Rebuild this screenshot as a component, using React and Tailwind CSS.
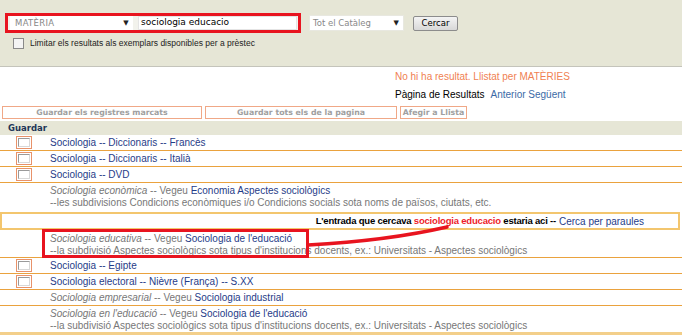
import React from "react";

const link = "text-[#1f3c88]";

const Check = () => (
  <span className="w-[16px] h-[13px] border border-[#e8926a] bg-white flex items-center justify-center">
    <span className="w-[12px] h-[9px] border border-[#9a9a9a] border-r-[#d8d8d8] border-b-[#d8d8d8] bg-white" />
  </span>
);

const Row = ({ check, children, tall, last }) => (
  <div
    className={`flex ${tall ? (last ? "items-start pt-[2px]" : "items-start pt-[3px]") : "items-center h-[16px]"} ${
      last ? "border-b-[3px] border-[#f3cf8a]" : "border-b border-[#eaa23e]"
    }`}
  >
    <div className="w-[50px] shrink-0 flex pl-[16px]">{check && <Check />}</div>
    <div className="leading-[12px]">{children}</div>
  </div>
);

const Ref = ({ from, to, note }) => (
  <>
    <div>
      <span className="italic text-[#777]">{from}</span>
      <span className="text-[#777]"> -- Vegeu </span>
      <span className={link}>{to}</span>
    </div>
    {note && <div className="text-[#777]">{note}</div>}
  </>
);

export default function App() {
  return (
    <div className="w-[682px] h-[335px] overflow-hidden bg-white font-['Liberation_Sans',Arial,sans-serif] text-[10px] relative">
      {/* search area */}
      <div className="h-[67px] bg-[#e6e6d6] border-b border-[#c4c4bb] pt-[13px] pl-[5px]">
        <div className="flex items-center">
          <div className="w-[296px] h-[20px] border-[3px] border-[#e8141f] flex items-stretch bg-[#f2f2ec]">
            <div className="w-[123px] ml-[2px] bg-white flex items-center justify-between pl-[5px] pr-[4px] text-[#888] font-['DejaVu_Sans',sans-serif] text-[8.5px] tracking-[0.3px]">
              <span>MATÈRIA</span>
              <span className="text-[7px] text-[#222]">▼</span>
            </div>
            <div className="flex-1 ml-[5px] mr-[1px] bg-white border border-[#e4e4e4] flex items-center pl-[2px] text-black font-['DejaVu_Sans',sans-serif] text-[9px]">
              sociologia educacio
            </div>
          </div>
          <div className="ml-[8px] w-[95px] h-[16px] bg-white border border-[#e8e8e0] flex items-center justify-between pl-[3px] pr-[4px] text-[#888] font-['DejaVu_Sans',sans-serif] text-[8.5px]">
            <span>Tot el Catàleg</span>
            <span className="text-[7px] text-[#222]">▼</span>
          </div>
          <button className="ml-[9px] w-[45px] h-[15px] rounded-[2px] border border-[#8c8c8c] bg-gradient-to-b from-[#f4f4f4] to-[#d8d8d8] text-black font-['DejaVu_Sans',sans-serif] text-[8.5px] leading-none">
            Cercar
          </button>
        </div>
        <div className="flex items-center mt-[4px] ml-[8px]">
          <span className="w-[11px] h-[11px] border border-[#8a8a8a] bg-[#f4f4f4]" />
          <span className="ml-[6px] text-[8.5px] text-[#222]">
            Limitar els resultats als exemplars disponibles per a prèstec
          </span>
        </div>
      </div>

      {/* results header */}
      <div className="h-[54px] bg-white flex flex-col leading-[12px]">
        <div className="ml-[395px] mt-[4px] text-[#f07f52]">No hi ha resultat. Llistat per MATÈRIES</div>
        <div className="ml-[395px] mt-[6px]">
          <span className="text-black">Pàgina de Resultats</span>
          <span className="ml-[6px] text-[#3b6aa6]">Anterior Següent</span>
        </div>
        <div className="mt-[5px] flex gap-[3px] pl-[2px] font-['DejaVu_Sans',sans-serif] font-bold text-[7.8px] text-[#a0a0a0]">
          <div className="w-[200px] h-[13px] border border-[#f0a887] flex items-center justify-center">
            Guardar els registres marcats
          </div>
          <div className="w-[192px] h-[13px] border border-[#f0a887] flex items-center justify-center">
            Guardar tots els de la pagina
          </div>
          <div className="w-[67px] h-[13px] border border-[#f0a887] flex items-center justify-center">
            Afegir a Llista
          </div>
        </div>
      </div>

      <div className="h-[14px] bg-[#e6e6d6] flex items-end pl-[8px] pb-[1px] font-['DejaVu_Sans',sans-serif] font-bold text-[8.5px] leading-[11px] text-[#1d3557]">
        Guardar
      </div>

      {/* list */}
      <div className="relative">
        <Row check><span className={link}>Sociologia -- Diccionaris -- Francès</span></Row>
        <Row check><span className={link}>Sociologia -- Diccionaris -- Italià</span></Row>
        <Row check><span className={link}>Sociologia -- DVD</span></Row>
        <div className="flex pt-[2px] pb-[3px] leading-[12px]">
          <div className="w-[50px] shrink-0" />
          <div>
            <Ref
              from="Sociologia econòmica"
              to="Economia Aspectes sociològics"
              note="--les subdivisions Condicions econòmiques i/o Condicions socials sota noms de països, ciutats, etc."
            />
          </div>
        </div>
        <div className="h-[18px] border-2 border-[#f3c66e] mr-[2px] flex items-center justify-end pr-[34px] text-black">
          <span className="font-bold text-[9.5px] tracking-[-0.2px]">
            L'entrada que cercava <span className="text-[#ee1c2a]">sociologia educacio</span> estaria aci --
          </span>
          <span className={`ml-[3px] ${link}`}>Cerca per paraules</span>
        </div>
        <Row tall>
          <Ref
            from="Sociologia educativa"
            to="Sociologia de l'educació"
            note="--la subdivisió Aspectes sociològics sota tipus d'institucions docents, ex.: Universitats - Aspectes sociològics"
          />
        </Row>
        <Row check><span className={link}>Sociologia -- Egipte</span></Row>
        <Row check><span className={link}>Sociologia electoral -- Nièvre (França) -- S.XX</span></Row>
        <Row><Ref from="Sociologia empresarial" to="Sociologia industrial" /></Row>
        <Row tall last>
          <Ref
            from="Sociologia en l'educació"
            to="Sociologia de l'educació"
            note="--la subdivisió Aspectes sociològics sota tipus d'institucions docents, ex.: Universitats - Aspectes sociològics"
          />
        </Row>

        {/* annotation */}
        <div className="absolute left-[42px] top-[94px] w-[267px] h-[29px] border-[3px] border-[#e8141f]" />
        <svg className="absolute left-[305px] top-[86px]" width="150" height="30" viewBox="0 0 150 30">
          <path d="M3 24 C40 22 90 18 142 6" stroke="#e8141f" strokeWidth="3.5" fill="none" strokeLinecap="round" />
        </svg>
      </div>
    </div>
  );
}
